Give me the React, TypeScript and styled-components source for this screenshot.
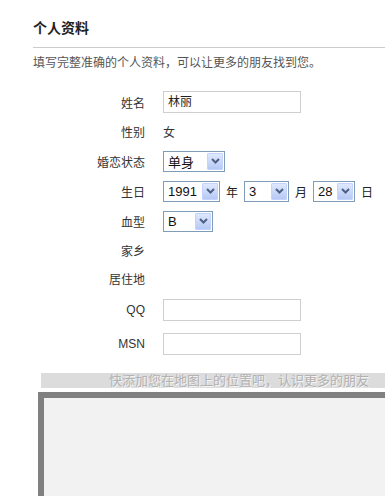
import { ReactNode } from "react";
import styled, { createGlobalStyle } from "styled-components";

const GlobalStyle = createGlobalStyle`
  html, body {
    margin: 0;
    padding: 0;
    background: #fff;
    overflow: hidden;
  }
  body {
    font-family: "Liberation Sans", "Noto Sans CJK SC", sans-serif;
    font-size: 12px;
    color: #333;
  }
`;

const Page = styled.div`
  padding: 19px 0 0 0;
  width: 385px;
  height: 496px;
  overflow: hidden;
`;

const Header = styled.div`
  margin-left: 33px;
`;

const Title = styled.h2`
  margin: 0;
  height: 28px;
  font-size: 14px;
  font-weight: bold;
  color: #222;
  line-height: 18px;
  border-bottom: 1px solid #ccc;
`;

const Intro = styled.p`
  margin: 0;
  padding-top: 7px;
  height: 32px;
  font-size: 12px;
  color: #555;
  line-height: 16px;
`;

const Form = styled.div`
  display: flex;
  flex-direction: column;
`;

const Row = styled.div<{ h: number }>`
  display: flex;
  align-items: center;
  height: ${(p) => p.h}px;
`;

const Label = styled.div`
  width: 145px;
  text-align: right;
  color: #333;
  font-size: 12px;
  flex-shrink: 0;
`;

const Field = styled.div`
  margin-left: 18px;
  display: flex;
  align-items: center;
  gap: 6px;
  color: #333;
`;

const TextBox = styled.div`
  box-sizing: border-box;
  width: 138px;
  height: 22px;
  border: 1px solid #cfcfcf;
  padding: 0 4px;
  line-height: 20px;
  font-size: 12px;
  color: #222;
`;

const SelectBox = styled.div<{ w: number }>`
  box-sizing: border-box;
  width: ${(p) => p.w}px;
  height: 21px;
  border: 1px solid #7f9db9;
  background: #fff;
  display: flex;
  align-items: center;
  justify-content: space-between;
  padding: 0 1px 0 4px;
  font-size: 13px;
  color: #111;
`;

const Arrow = styled.span`
  box-sizing: border-box;
  width: 16px;
  height: 17px;
  border: 1px solid #c3d3fd;
  border-radius: 1px;
  background: linear-gradient(#dfe8fe, #b6c9f5);
  display: flex;
  align-items: center;
  justify-content: center;
`;

const Unit = styled.span`
  font-size: 12px;
  color: #222;
`;

const Tip = styled.div`
  margin: 12px 0 0 41px;
  height: 15px;
  background: #dcdcdc;
  text-align: right;
  padding-right: 16px;
  font-size: 13px;
  line-height: 15px;
  color: #b2b2b2;
  text-shadow: 1px 1px 0 #f4f4f4;
  white-space: nowrap;
`;

const MapArea = styled.div`
  margin: 4px 0 0 38px;
  height: 120px;
  border-top: 6px solid #808080;
  border-left: 6px solid #808080;
  background: #f2f2f2;
`;

const Select = ({ w, children }: { w: number; children: ReactNode }) => (
  <SelectBox w={w}>
    <span>{children}</span>
    <Arrow>
      <svg width="9" height="6" viewBox="0 0 9 6">
        <polyline
          points="1,1 4.5,4.5 8,1"
          fill="none"
          stroke="#4d6185"
          strokeWidth="2"
        />
      </svg>
    </Arrow>
  </SelectBox>
);

export default function App() {
  return (
    <Page>
      <GlobalStyle />
      <Header>
        <Title>个人资料</Title>
        <Intro>填写完整准确的个人资料，可以让更多的朋友找到您。</Intro>
      </Header>
      <Form>
        <Row h={30}>
          <Label>姓名</Label>
          <Field>
            <TextBox>林丽</TextBox>
          </Field>
        </Row>
        <Row h={28}>
          <Label>性别</Label>
          <Field>女</Field>
        </Row>
        <Row h={32}>
          <Label>婚恋状态</Label>
          <Field>
            <Select w={62}>单身</Select>
          </Field>
        </Row>
        <Row h={28}>
          <Label>生日</Label>
          <Field>
            <Select w={57}>1991</Select>
            <Unit>年</Unit>
            <Select w={45}>3</Select>
            <Unit>月</Unit>
            <Select w={42}>28</Select>
            <Unit>日</Unit>
          </Field>
        </Row>
        <Row h={32}>
          <Label>血型</Label>
          <Field>
            <Select w={50}>B</Select>
          </Field>
        </Row>
        <Row h={26}>
          <Label>家乡</Label>
        </Row>
        <Row h={30}>
          <Label>居住地</Label>
        </Row>
        <Row h={34}>
          <Label>QQ</Label>
          <Field>
            <TextBox />
          </Field>
        </Row>
        <Row h={34}>
          <Label>MSN</Label>
          <Field>
            <TextBox />
          </Field>
        </Row>
      </Form>
      <Tip>快添加您在地图上的位置吧，认识更多的朋友</Tip>
      <MapArea />
    </Page>
  );
}
